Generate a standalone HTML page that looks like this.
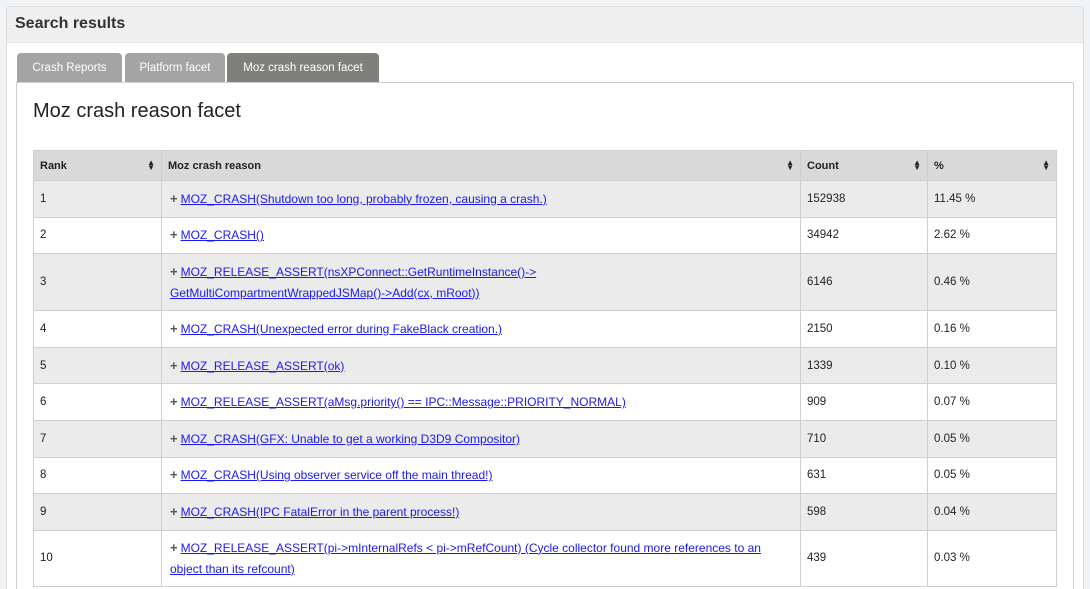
<!DOCTYPE html>
<html><head><meta charset="utf-8"><style>
*{box-sizing:border-box;margin:0;padding:0}
html,body{width:1090px;height:589px;overflow:hidden}
body{position:relative;background:#f1f4f7;font-family:"Liberation Sans",Arial,sans-serif}
.panel{position:absolute;left:6px;top:6px;width:1078px;height:583px;background:#fff;border:1px solid #dcdcdc;border-bottom:none;border-radius:3px 3px 0 0}
.hd{height:36px;background:#efefef;border-bottom:1px solid #e4e4e4;padding-left:8px;font-weight:bold;font-size:16px;color:#333;line-height:34px}
.tab{position:absolute;top:53px;height:29px;border-radius:4px 4px 0 0;color:#fff;font-size:11.5px;line-height:30px;text-align:center;background:#a4a4a4}
.box{position:absolute;left:16px;top:82px;width:1058px;height:507px;border:1px solid #cfcfcf;border-bottom:none}
h2{position:absolute;left:33px;top:100px;font-weight:normal;font-size:20px;color:#222}
table{position:absolute;left:33px;top:150px;border-collapse:collapse;table-layout:fixed;font-size:12px;color:#222}
td,th{border:1px solid #cfcfcf;padding:0 6px;vertical-align:middle;text-align:left}
th{background:#d9d9d9;height:30px;font-weight:bold;font-size:11px;position:relative}
th .s{position:absolute;right:6px;top:9px;font-size:8px;line-height:5px}
tr.g td{background:#ebebeb}
td{height:36.6px;font-size:11.5px}
td.r{line-height:21px;font-size:12px;padding-left:8px}
a{color:#1a1aee;text-decoration:underline}
.p{font-weight:bold;color:#555;font-size:13px;margin-right:3px}
</style></head><body>
<div class="panel"><div class="hd">Search results</div></div>
<div class="tab" style="left:17px;width:105px">Crash Reports</div>
<div class="tab" style="left:125px;width:100px">Platform facet</div>
<div class="tab" style="left:227px;width:152px;background:#7f807b">Moz crash reason facet</div>
<div class="box"></div>
<h2>Moz crash reason facet</h2>
<table>
<colgroup><col style="width:128px"><col style="width:639px"><col style="width:127px"><col style="width:129px"></colgroup>
<tr><th>Rank<span class="s">▲<br>▼</span></th><th>Moz crash reason<span class="s">▲<br>▼</span></th><th>Count<span class="s">▲<br>▼</span></th><th>%<span class="s">▲<br>▼</span></th></tr>
<tr class="g"><td>1</td><td class="r"><span class="p">+</span><a>MOZ_CRASH(Shutdown too long, probably frozen, causing a crash.)</a></td><td>152938</td><td>11.45 %</td></tr>
<tr><td>2</td><td class="r"><span class="p">+</span><a>MOZ_CRASH()</a></td><td>34942</td><td>2.62 %</td></tr>
<tr class="g"><td style="height:57px">3</td><td class="r"><span class="p">+</span><a>MOZ_RELEASE_ASSERT(nsXPConnect::GetRuntimeInstance()-&gt;<br>GetMultiCompartmentWrappedJSMap()-&gt;Add(cx, mRoot))</a></td><td>6146</td><td>0.46 %</td></tr>
<tr><td>4</td><td class="r"><span class="p">+</span><a>MOZ_CRASH(Unexpected error during FakeBlack creation.)</a></td><td>2150</td><td>0.16 %</td></tr>
<tr class="g"><td>5</td><td class="r"><span class="p">+</span><a>MOZ_RELEASE_ASSERT(ok)</a></td><td>1339</td><td>0.10 %</td></tr>
<tr><td>6</td><td class="r"><span class="p">+</span><a>MOZ_RELEASE_ASSERT(aMsg.priority() == IPC::Message::PRIORITY_NORMAL)</a></td><td>909</td><td>0.07 %</td></tr>
<tr class="g"><td>7</td><td class="r"><span class="p">+</span><a>MOZ_CRASH(GFX: Unable to get a working D3D9 Compositor)</a></td><td>710</td><td>0.05 %</td></tr>
<tr><td>8</td><td class="r"><span class="p">+</span><a>MOZ_CRASH(Using observer service off the main thread!)</a></td><td>631</td><td>0.05 %</td></tr>
<tr class="g"><td>9</td><td class="r"><span class="p">+</span><a>MOZ_CRASH(IPC FatalError in the parent process!)</a></td><td>598</td><td>0.04 %</td></tr>
<tr><td style="height:56px">10</td><td class="r"><span class="p">+</span><a>MOZ_RELEASE_ASSERT(pi-&gt;mInternalRefs &lt; pi-&gt;mRefCount) (Cycle collector found more references to an<br>object than its refcount)</a></td><td>439</td><td>0.03 %</td></tr>
</table>
</body></html>
